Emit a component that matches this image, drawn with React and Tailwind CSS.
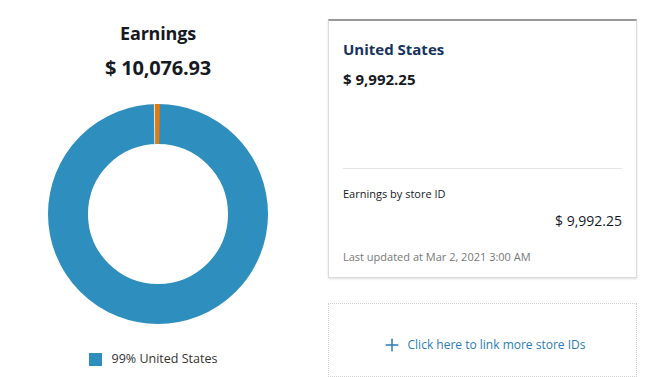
import React from 'react';
import { Plus } from 'lucide-react';

const Donut = () => {
    const cx = 110, cy = 110, r = 90;
    const pt = (deg) => {
        const a = (deg - 90) * Math.PI / 180;
        return [cx + r * Math.cos(a), cy + r * Math.sin(a)];
    };
    const [x1, y1] = pt(-2.2);
    const [x2, y2] = pt(1.0);
    return (
        <svg width="220" height="224" viewBox="0 0 220 224">
            <circle cx={cx} cy={cy} r={r} fill="none" stroke="#2e8ebd" strokeWidth="40" />
            <path d={`M ${x1} ${y1} A ${r} ${r} 0 0 1 ${x2} ${y2}`} fill="none" stroke="#e07b12" strokeWidth="40" />
            <line x1={cx - 3.6} y1="0" x2={cx - 3.3} y2="40" stroke="#ffffff" strokeWidth="0.8" />
        </svg>
    );
};

const App = () => {
    return (
        <div className="w-[651px] h-[377px] overflow-hidden bg-white flex text-[#16191f]" style={{ fontFamily: '"Open Sans", "Noto Sans", sans-serif' }}>
            {/* Chart column */}
            <div className="w-[316px] flex flex-col items-center pt-[20px]">
                <h1 className="text-[18px] font-bold leading-[26px] tracking-[-0.2px]">Earnings</h1>
                <div className="text-[20px] font-bold leading-[28px] mt-[8px] tracking-[-0.2px]">$ 10,076.93</div>
                <div className="mt-[22px]">
                    <Donut />
                </div>
                <div className="flex items-center mt-[22px] ml-[-10px]">
                    <span className="w-[13px] h-[13px] bg-[#2e8ebd] mr-[10px]" />
                    <span className="text-[12.5px] text-[#333]">99% United States</span>
                </div>
            </div>

            {/* Store column */}
            <div className="w-[309px] ml-[12px] pt-[19px] flex flex-col">
                <div className="border border-[#dcdcdc] border-t-2 border-t-[#999] shadow-[0_1px_2px_rgba(0,0,0,0.12)] px-[14px] pt-[17px] pb-[12px]">
                    <h2 className="text-[15px] font-bold leading-[22px] text-[#16325c]">United States</h2>
                    <div className="text-[15px] font-bold leading-[22px] mt-[8px]">$ 9,992.25</div>
                    <div className="h-px bg-[#e6e6e6] mt-[78px]" />
                    <div className="text-[11px] leading-[16px] mt-[17px]">Earnings by store ID</div>
                    <div className="text-[14px] leading-[20px] text-right mt-[9px]">$ 9,992.25</div>
                    <div className="text-[11px] leading-[16px] text-[#777] mt-[18px]">Last updated at Mar 2, 2021 3:00 AM</div>
                </div>
                <div className="mt-[25px] border border-dotted border-[#cfcfcf] h-[100px] flex justify-center pt-[30px]">
                    <button className="flex items-center h-[22px] text-[#2a7bb8] text-[12px] ml-[2px]">
                        <Plus size={20} strokeWidth={1.8} className="mr-[6px]" />
                        <span>Click here to link more store IDs</span>
                    </button>
                </div>
            </div>
        </div>
    );
};

export default App;
